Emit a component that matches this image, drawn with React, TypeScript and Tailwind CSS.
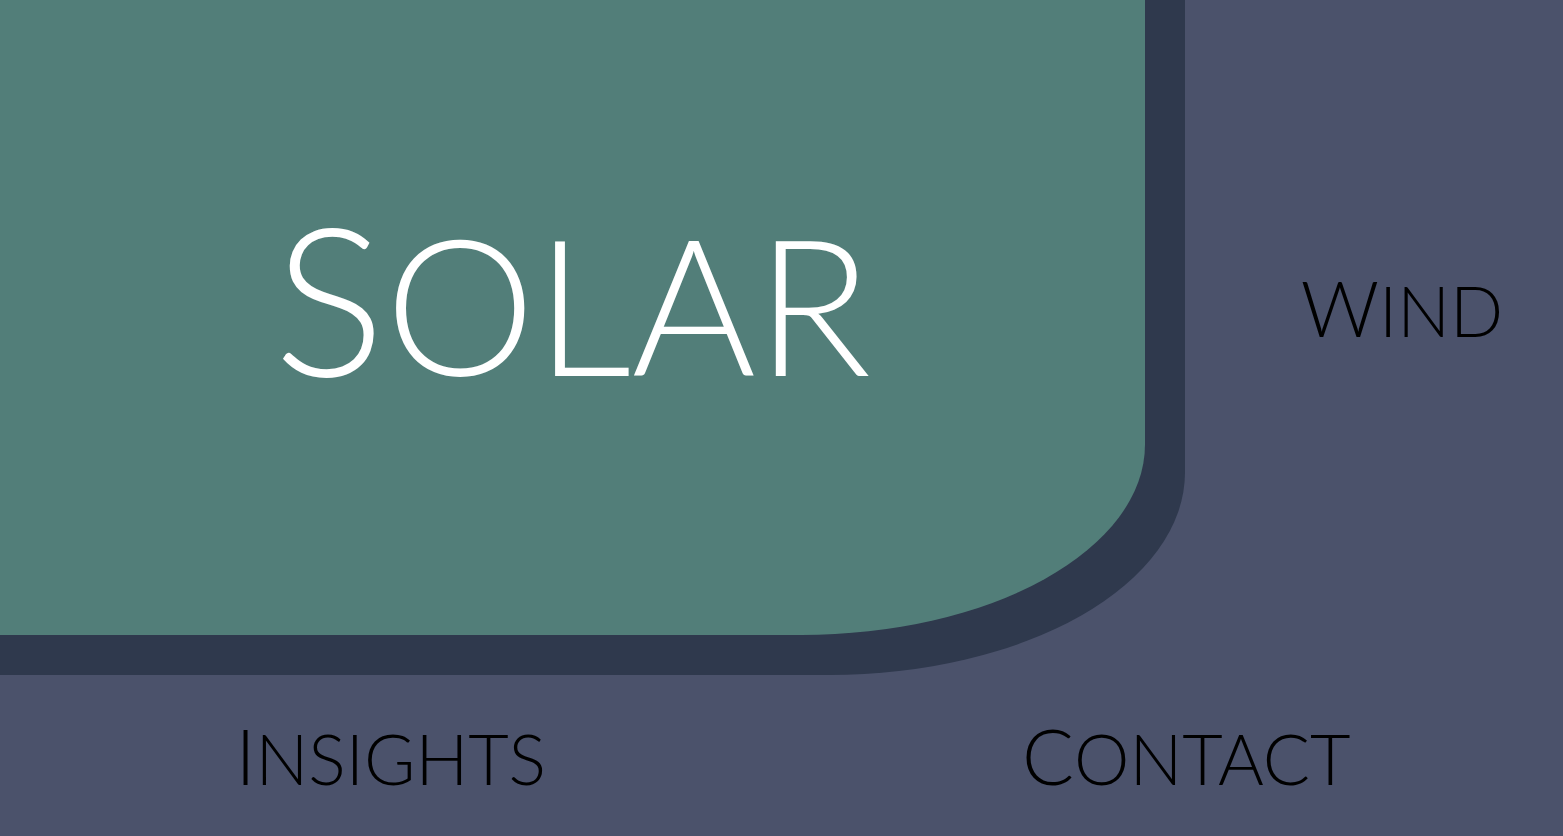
const itemText =
  "block font-light uppercase leading-none text-[70px] first-letter:text-[77px]";

export default function App() {
  return (
    <nav className="grid min-h-screen grid-cols-[1185fr_378fr] grid-rows-[675fr_161fr] overflow-hidden bg-[#4b526b] font-['Lato',sans-serif] text-black">
      <div className="flex rounded-br-[30%] bg-[#2f394d] pr-10 pb-10">
        <a
          href="#solar"
          className="flex grow items-center justify-center rounded-br-[30%] bg-[#527e79] pb-11 text-white"
        >
          <span className="block text-[190px] leading-none font-light uppercase first-letter:text-[208px]">
            Solar
          </span>
        </a>
      </div>
      <a href="#wind" className="flex items-center justify-center pb-15 pl-14">
        <span className={itemText}>Wind</span>
      </a>
      <div className="col-span-2 grid grid-cols-2">
        <a href="#insights" className="flex items-center justify-center">
          <span className={itemText}>Insights</span>
        </a>
        <a href="#contact" className="flex items-center justify-center pl-7">
          <span className={itemText}>Contact</span>
        </a>
      </div>
    </nav>
  );
}
